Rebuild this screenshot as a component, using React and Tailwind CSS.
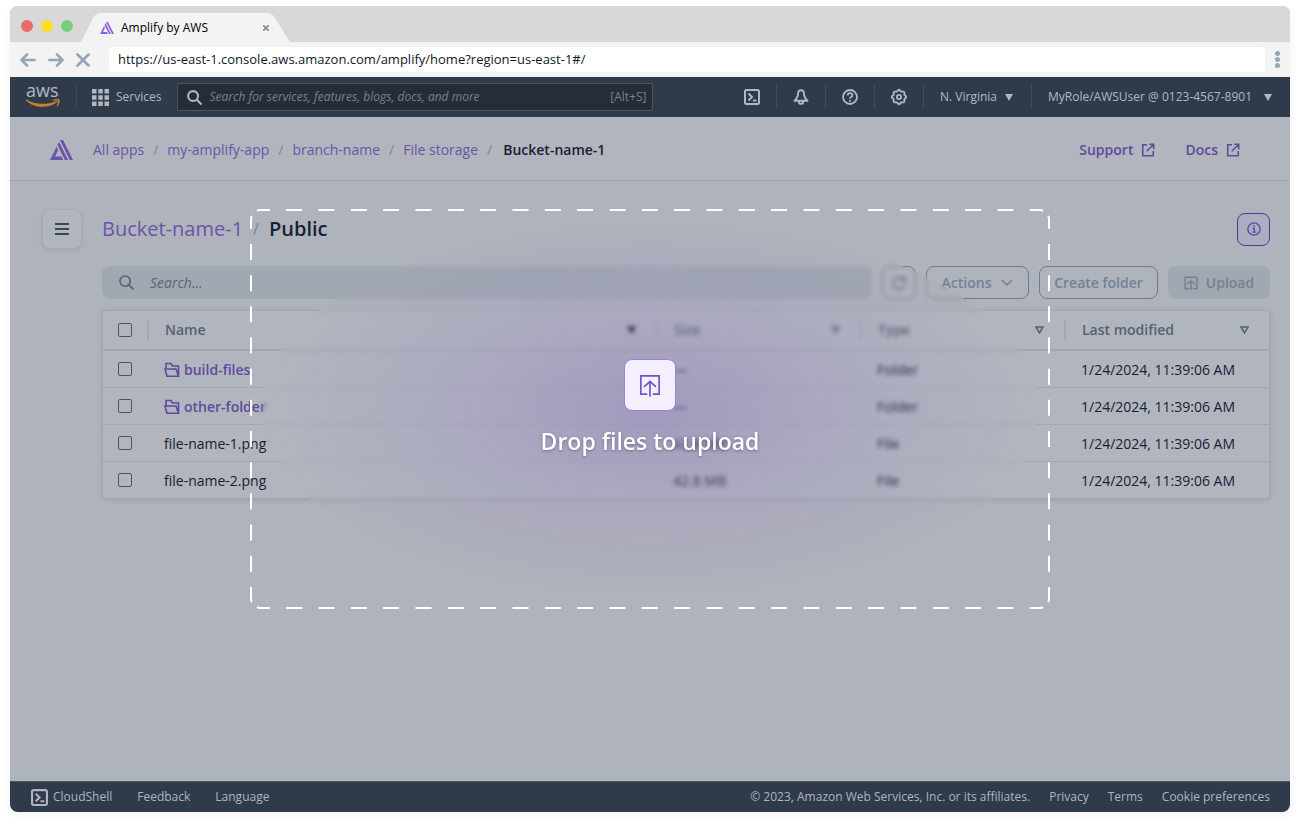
import React from "react";

const purple = "text-[#6c54aa]";

const gearPath =
  Array.from({ length: 64 }, (_, i) => {
    const a = (i / 64) * Math.PI * 2;
    const r = 6.5 + 0.7 * Math.cos(8 * a);
    return `${i ? "L" : "M"}${(8 + r * Math.cos(a)).toFixed(2)} ${(8 + r * Math.sin(a)).toFixed(2)}`;
  }).join("") + "Z";

function AmplifyLogo({ className }) {
  return (
    <svg viewBox="0 3 24 18" preserveAspectRatio="none" className={className} fill="currentColor" aria-hidden="true">
      <path d="M5.223 17.905h6.76l1.731 3.047H0l4.815-8.344 2.018-3.494 1.733 3.002zm2.52-10.371L9.408 4.65l9.415 16.301h-3.334zm2.590-4.486h3.330L24 20.952h-3.334z" />
    </svg>
  );
}

function Stroke({ className, width = 2, box = "0 0 16 16", children }) {
  return (
    <svg viewBox={box} className={className} fill="none" stroke="currentColor" strokeWidth={width} aria-hidden="true">
      {children}
    </svg>
  );
}

function UploadIcon({ className, width }) {
  return (
    <Stroke className={className} width={width} box="0 0 24 24">
      <path d="M9 22H2V2h20v20h-7M12 24.500V8M5.500 14 12 8l6.500 6" />
    </Stroke>
  );
}

function ExternalIcon() {
  return (
    <Stroke className="size-[14px]" width={1.8}>
      <path d="M7 2H2v12.500h12V9M9.500 1.500H14.500v5.500M14 2 6.500 9.500" />
    </Stroke>
  );
}

function ShellIcon({ className }) {
  return (
    <Stroke className={className} width={2}>
      <rect x="1" y="1" width="14" height="14" rx="1.500" />
      <path d="M4.500 4.500 8 8l-3.500 3.500M9 11.500h3.500" />
    </Stroke>
  );
}

function FolderIcon() {
  return (
    <Stroke className="size-4 shrink-0" width={1.6}>
      <path d="M2 6.500V1.500h5l1.500 2.500H14.500V14.200M1 7h11l2.500 7.200H3z" />
    </Stroke>
  );
}

function Caret({ className = "" }) {
  return (
    <svg viewBox="0 0 8 7" className={`h-[7px] w-2 ${className}`} fill="currentColor" aria-hidden="true">
      <path d="M0 0h8L4 7z" />
    </svg>
  );
}

function SortIcon({ filled }) {
  return (
    <svg viewBox="0 0 9 8" className={filled ? "h-2 w-[9px] text-[#1f2638]" : "h-2 w-[9px]"} fill={filled ? "currentColor" : "none"} stroke="currentColor" strokeWidth="1.600" aria-hidden="true">
      <path d="M1 1h7L4.500 6.800z" />
    </svg>
  );
}

function BrowserChrome() {
  return (
    <>
      <div className="flex h-9 items-end bg-[#d8d8d8]">
        <div className="flex items-center gap-2 self-center pt-1 pl-[11px]">
          <span className="size-3 rounded-full bg-[#ed6a6b]" />
          <span className="size-3 rounded-full bg-[#ffdf1f]" />
          <span className="size-3 rounded-full bg-[#7ace80]" />
        </div>
        <div className="relative ml-2 h-[29px] w-[210px]">
          <svg viewBox="0 0 210 29" className="absolute inset-0 size-full" fill="#f3f3f3" aria-hidden="true">
            <path d="M0 29 12 5Q15 0 20 0H186Q191 0 194 5L209 29z" />
          </svg>
          <div className="relative flex h-full items-center pt-px pr-5 pl-[19px] text-black">
            <AmplifyLogo className="h-3 w-[14px] text-[#8a5fe0]" />
            <span className="ml-[7px] text-xs">Amplify by AWS</span>
            <button type="button" aria-label="Close tab" className="ml-auto p-0.5 text-[#7c8b9d]">
              <Stroke className="size-[6px]" box="0 0 6 6" width={1.6}>
                <path d="M0 0 6 6M6 0 0 6" />
              </Stroke>
            </button>
          </div>
        </div>
      </div>
      <div className="flex h-[35px] items-center bg-[#f3f3f3] pr-[10px] pl-[10px] text-[#98a5b5]">
        <div className="flex items-center gap-3">
          <button type="button" aria-label="Back">
            <Stroke className="h-[14px] w-4" box="0 0 16 14" width={2.6}>
              <path d="M14.700 7H2M7 1.500 1.500 7 7 12.500" strokeLinejoin="round" strokeLinecap="round" />
            </Stroke>
          </button>
          <button type="button" aria-label="Forward">
            <Stroke className="h-[14px] w-4" box="0 0 16 14" width={2.6}>
              <path d="M1.300 7H14M9 1.500l5.500 5.500L9 12.500" strokeLinejoin="round" strokeLinecap="round" />
            </Stroke>
          </button>
          <button type="button" aria-label="Stop">
            <Stroke className="size-[14px]" box="0 0 14 14" width={2.8}>
              <path d="M1.500 1.500 12.500 12.500M12.500 1.500 1.500 12.500" strokeLinecap="round" />
            </Stroke>
          </button>
        </div>
        <input
          aria-label="Address"
          defaultValue="https://us-east-1.console.aws.amazon.com/amplify/home?region=us-east-1#/"
          className="ml-[19px] h-[25px] min-w-0 flex-1 rounded-[3px] bg-white px-[9px] pb-0.5 text-[13px] text-[#0f1726] outline-none"
        />
        <button type="button" aria-label="Browser menu" className="ml-[10px] flex flex-col gap-px">
          <span className="size-[5px] rounded-full bg-current" />
          <span className="size-[5px] rounded-full bg-current" />
          <span className="size-[5px] rounded-full bg-current" />
        </button>
      </div>
    </>
  );
}

function NavIcon({ label, children }) {
  return (
    <button type="button" aria-label={label} className="flex h-6 w-[49px] items-center justify-center border-r border-[#414d5e]">
      {children}
    </button>
  );
}

function ConsoleNav() {
  return (
    <nav className="flex h-10 items-center bg-[#2f3a4b] text-xs text-[#b3b8c0]">
      <a href="#aws" aria-label="AWS home" className="flex h-6 w-[67px] flex-col items-start border-r border-[#3d4858] pl-4">
        <span className="-mt-1 text-[18px]/[18px] font-medium">aws</span>
        <svg viewBox="0 0 34 9" className="h-[9px] w-[34px] text-[#c08430]" fill="currentColor" aria-hidden="true">
          <path d="M0.500 0.500C9 5.800 21 6.200 30.500 2 31.500 1.600 32 2.600 31.200 3.200 22 9.800 8 9.400 0 1.400-.3.900 0 .3.500.5zM26.800 1.300C28.600 0 32.600-.2 33.400.500 34.200 1.300 33.300 5.400 31.500 7.200 31 7.600 30.600 7.300 30.800 6.800 31.400 5.300 32.300 2.800 31.800 2 31.200 1.300 28.700 1.700 27.200 1.900 26.500 2 26.300 1.600 26.800 1.300z" />
        </svg>
      </a>
      <button type="button" className="ml-[15px] flex items-center gap-[7px]">
        <svg viewBox="0 0 17 17" className="size-[17px]" fill="currentColor" aria-hidden="true">
          <path d="M0 0h4.500v4.500H0zM6.300 0h4.500v4.500H6.300zM12.500 0H17v4.500h-4.500zM0 6.300h4.500v4.500H0zM6.300 6.300h4.500v4.500H6.300zM12.500 6.300H17v4.500h-4.500zM0 12.500h4.500V17H0zM6.300 12.500h4.500V17H6.300zM12.500 12.500H17V17h-4.500z" />
        </svg>
        Services
      </button>
      <label className="ml-4 flex h-7 w-[476px] items-center rounded-[2px] border border-[#4c5663] bg-[#262d38] pr-[6px] pl-[9px]">
        <Stroke className="size-[15px] shrink-0" width={2.2}>
          <circle cx="6.500" cy="6.500" r="5.300" />
          <path d="m10.500 10.500 5 5" />
        </Stroke>
        <input
          aria-label="Search the console"
          placeholder="Search for services, features, blogs, docs, and more"
          className="ml-[7px] min-w-0 flex-1 bg-transparent italic outline-none placeholder:text-[#78818d]"
        />
        <span className="text-[#78818d]">[Alt+S]</span>
      </label>
      <div className="ml-auto flex items-center">
        <NavIcon label="CloudShell"><ShellIcon className="size-4" /></NavIcon>
        <NavIcon label="Notifications">
          <Stroke className="size-4" width={1.9}>
            <path d="M8 1.200C5.800 1.200 5 3 5 5 5 7.500 4 9 1.500 11.800H14.500C12 9 11 7.500 11 5 11 3 10.200 1.200 8 1.200zM5.800 12.500a2.200 2.400 0 0 0 4.400 0" strokeLinejoin="round" />
          </Stroke>
        </NavIcon>
        <NavIcon label="Help">
          <Stroke className="size-4" width={1.8}>
            <circle cx="8" cy="8" r="7" />
            <path d="M5.800 6.500C5.800 3.400 10.400 3.500 10.400 6.200 10.400 8 8 7.800 8 9.800M8 11v1.800" />
          </Stroke>
        </NavIcon>
        <NavIcon label="Settings">
          <Stroke className="size-4 overflow-visible" width={1.8}>
            <path d={gearPath} />
            <circle cx="8" cy="8" r="2.100" />
          </Stroke>
        </NavIcon>
        <button type="button" className="flex h-6 w-[108px] items-center justify-between border-r border-[#414d5e] pr-[18px] pl-4">
          N. Virginia <Caret />
        </button>
        <button type="button" className="flex h-6 w-[258px] items-center justify-between pr-[18px] pl-4">
          MyRole/AWSUser @ 0123-4567-8901 <Caret />
        </button>
      </div>
    </nav>
  );
}

function Slash() {
  return <span className="px-[9px] text-[#7c8896]">/</span>;
}

function AppBar() {
  return (
    <header className="flex h-16 items-center border-b border-[#a0a6b3] bg-[#b1b5bd] pt-0.5 pr-[50px] pl-10 text-sm text-[#6c54aa]">
      <a href="#home" aria-label="Amplify home"><AmplifyLogo className="h-5 w-[23px]" /></a>
      <div className="ml-5 flex items-center">
        <a href="#apps">All apps</a><Slash />
        <a href="#app">my-amplify-app</a><Slash />
        <a href="#branch">branch-name</a><Slash />
        <a href="#storage">File storage</a><Slash />
        <span className="pl-0.5 font-semibold text-[#182033]">Bucket-name-1</span>
      </div>
      <div className="ml-auto flex items-center gap-[30px] font-semibold text-[#604a9e]">
        <a href="#support" className="flex items-center gap-2">Support <ExternalIcon /></a>
        <a href="#docs" className="flex items-center gap-2">Docs <ExternalIcon /></a>
      </div>
    </header>
  );
}

function Toolbar() {
  const outline = "flex h-[33px] items-center justify-center rounded-lg border border-[#6f7d8f]";
  return (
    <div className="mt-[17px] flex gap-[10px] text-sm font-semibold text-[#748294]">
      <label className="flex h-[33px] flex-1 items-center rounded-lg bg-[#a0a8b2] pl-[17px] font-normal text-[#566272]">
        <Stroke className="size-[15px]" width={1.7}>
          <circle cx="6.500" cy="6.500" r="5.500" />
          <path d="m10.500 10.500 5 5" />
        </Stroke>
        <input aria-label="Search files" placeholder="Search..." className="ml-4 min-w-0 flex-1 bg-transparent italic outline-none placeholder:text-[#5a6675]" />
      </label>
      <button type="button" aria-label="Refresh" className={`${outline} w-[34px]`}>
        <Stroke className="size-4" width={2}>
          <path d="M13.500 9A5.800 5.800 0 1 1 12 4M13.500 1v4.500H9" />
        </Stroke>
      </button>
      <button type="button" className={`${outline} w-[103px] gap-[10px]`}>
        Actions
        <Stroke className="h-[7px] w-3" box="0 0 12 7" width={1.7}><path d="m1 1 5 5 5-5" /></Stroke>
      </button>
      <button type="button" className={`${outline} w-[119px]`}>Create folder</button>
      <button type="button" className="flex h-[33px] w-[102px] items-center justify-center gap-2 rounded-lg bg-[#a0a8b2]">
        <UploadIcon className="size-[14px] overflow-visible" width={2.6} />
        Upload
      </button>
    </div>
  );
}

const rows = [
  { name: "build-files", folder: true, size: "—", type: "Folder" },
  { name: "other-folder", folder: true, size: "—", type: "Folder" },
  { name: "file-name-1.png", size: "42.8 MB", type: "File" },
  { name: "file-name-2.png", size: "42.8 MB", type: "File" },
];

function HeaderCell({ children, filled }) {
  return (
    <th className="p-0 text-left font-semibold">
      <div className="flex items-center">
        <span className="h-5 w-0.5 bg-[#a0a7b2]" />
        <span className="ml-4">{children}</span>
        <button type="button" aria-label={`Sort by ${children}`} className="mr-5 ml-auto"><SortIcon filled={filled} /></button>
      </div>
    </th>
  );
}

function Check({ label }) {
  return (
    <input type="checkbox" aria-label={label} className="block size-[14px] appearance-none rounded-[2px] border border-[#4a5666]" />
  );
}

function FileTable() {
  return (
    <div className="mt-[11px] rounded-[4px] border border-[#a2a8b3] bg-[#b1b6be] shadow-[0_1px_4px_rgba(90,100,120,0.25)]">
      <table className="w-full table-fixed border-collapse text-sm text-[#182033]">
        <colgroup>
          <col className="w-11" />
          <col />
          <col className="w-[204px]" />
          <col className="w-[204px]" />
          <col className="w-[205px]" />
        </colgroup>
        <thead>
          <tr className="h-[39px] border-b-2 border-[#a0a7b2] text-[#566272]">
            <th className="p-0 pl-[15px]"><Check label="Select all" /></th>
            <HeaderCell filled>Name</HeaderCell>
            <HeaderCell>Size</HeaderCell>
            <HeaderCell>Type</HeaderCell>
            <HeaderCell>Last modified</HeaderCell>
          </tr>
        </thead>
        <tbody>
          {rows.map((row) => (
            <tr key={row.name} className="h-[37px] border-b border-[#a0a7b2] last:border-b-0">
              <td className="p-0 pl-[15px]"><Check label={`Select ${row.name}`} /></td>
              <td className="p-0 pt-0.5 pl-[17px]">
                {row.folder ? (
                  <a href={`#${row.name}`} className="flex items-center gap-1 font-semibold text-[#604a9e]"><FolderIcon />{row.name}</a>
                ) : row.name}
              </td>
              <td className="p-0 pt-0.5 pl-[17px]">{row.size}</td>
              <td className="p-0 pt-0.5 pl-[17px]">{row.type}</td>
              <td className="p-0 pt-0.5 pl-[17px]">1/24/2024, 11:39:06 AM</td>
            </tr>
          ))}
        </tbody>
      </table>
    </div>
  );
}

function DropOverlay() {
  return (
    <div className="pointer-events-none absolute inset-0 flex items-center justify-center">
      <div className="relative flex h-[400px] w-[800px] flex-col items-center justify-center">
        <div className="absolute inset-x-3 inset-y-3 rounded-[50%] bg-[radial-gradient(closest-side,rgba(140,112,190,0.40),rgba(155,138,198,0.26)_50%,rgba(177,181,189,0))] backdrop-blur-[2px]" />
        <svg viewBox="0 0 800 400" className="absolute inset-0 size-full" fill="none" stroke="white" strokeWidth="2" aria-hidden="true">
          <path d="M7 2Q8 1 10 1H790Q792 1 793 2" strokeDasharray="16 16.330" strokeDashoffset="3" />
          <path d="M7 398Q8 399 10 399H790Q792 399 793 398" strokeDasharray="16 16.330" strokeDashoffset="3" />
          <path d="M2 7Q1 8 1 10V390Q1 392 2 393" strokeDasharray="16 15.170" strokeDashoffset="3" />
          <path d="M798 7Q799 8 799 10V390Q799 392 798 393" strokeDasharray="16 15.170" strokeDashoffset="3" />
        </svg>
        <div className="relative flex size-[52px] items-center justify-center rounded-lg border border-[#9d80e0] bg-[#f3effe] text-[#7650c4]">
          <UploadIcon className="size-[22px] overflow-visible" width={1.8} />
        </div>
        <p className="relative mt-3 text-[23px]/[36px] font-semibold text-white [text-shadow:0_1px_3px_rgba(60,50,90,0.500)]">Drop files to upload</p>
      </div>
    </div>
  );
}

function Footer() {
  return (
    <footer className="flex h-[31px] items-center border-t border-[#4d5867] bg-[#2f3a4b] pr-5 pl-[21px] text-xs text-[#b0b5bd]">
      <div className="flex items-center gap-[25px]">
        <a href="#shell" className="flex items-center gap-[5px]"><ShellIcon className="size-[17px]" />CloudShell</a>
        <a href="#feedback">Feedback</a>
        <a href="#language">Language</a>
      </div>
      <div className="ml-auto flex items-center gap-[19px]">
        <span>© 2023, Amazon Web Services, Inc. or its affiliates.</span>
        <a href="#privacy">Privacy</a>
        <a href="#terms">Terms</a>
        <a href="#cookies">Cookie preferences</a>
      </div>
    </footer>
  );
}

export default function App() {
  return (
    <div className="flex min-h-screen flex-col bg-white px-[10px] pt-[6px] pb-[14px] font-['Open_Sans','Noto_Sans',sans-serif]">
      <div className="relative flex flex-1 flex-col overflow-hidden rounded-lg bg-[#afb3bb] shadow-[0_3px_10px_rgba(0,0,0,0.06)]">
        <BrowserChrome />
        <ConsoleNav />
        <AppBar />
        <main className="flex flex-1 items-start gap-5 pt-7 pr-5 pl-8">
          <button type="button" aria-label="Open menu" className="flex size-10 items-center justify-center rounded-lg border border-[#a2abb6] bg-[#b1b6be] text-[#3c4656] shadow-[0_2px_4px_rgba(90,100,120,0.150)]">
            <Stroke className="h-3 w-[14px]" box="0 0 14 12"><path d="M0 1h14M0 6h14M0 11h14" /></Stroke>
          </button>
          <section className="min-w-0 flex-1">
            <div className="flex h-10 items-center text-xl">
              <a href="#bucket" className={purple}>Bucket-name-1</a>
              <span className="px-[10px] text-base text-[#7c8896]">/</span>
              <h1 className="font-semibold text-[#182033]">Public</h1>
              <button type="button" aria-label="Details" className="ml-auto flex size-[33px] items-center justify-center rounded-lg border border-[#503a92] bg-[#abaec0] text-[#604a9e]">
                <Stroke className="size-[14px]" width={1.6}>
                  <circle cx="8" cy="8" r="7" />
                  <path d="M8 3.800v2M6.300 7.500H8.300V11.500M6 11.600h4.500" />
                </Stroke>
              </button>
            </div>
            <Toolbar />
            <FileTable />
          </section>
        </main>
        <Footer />
        <DropOverlay />
      </div>
    </div>
  );
}
